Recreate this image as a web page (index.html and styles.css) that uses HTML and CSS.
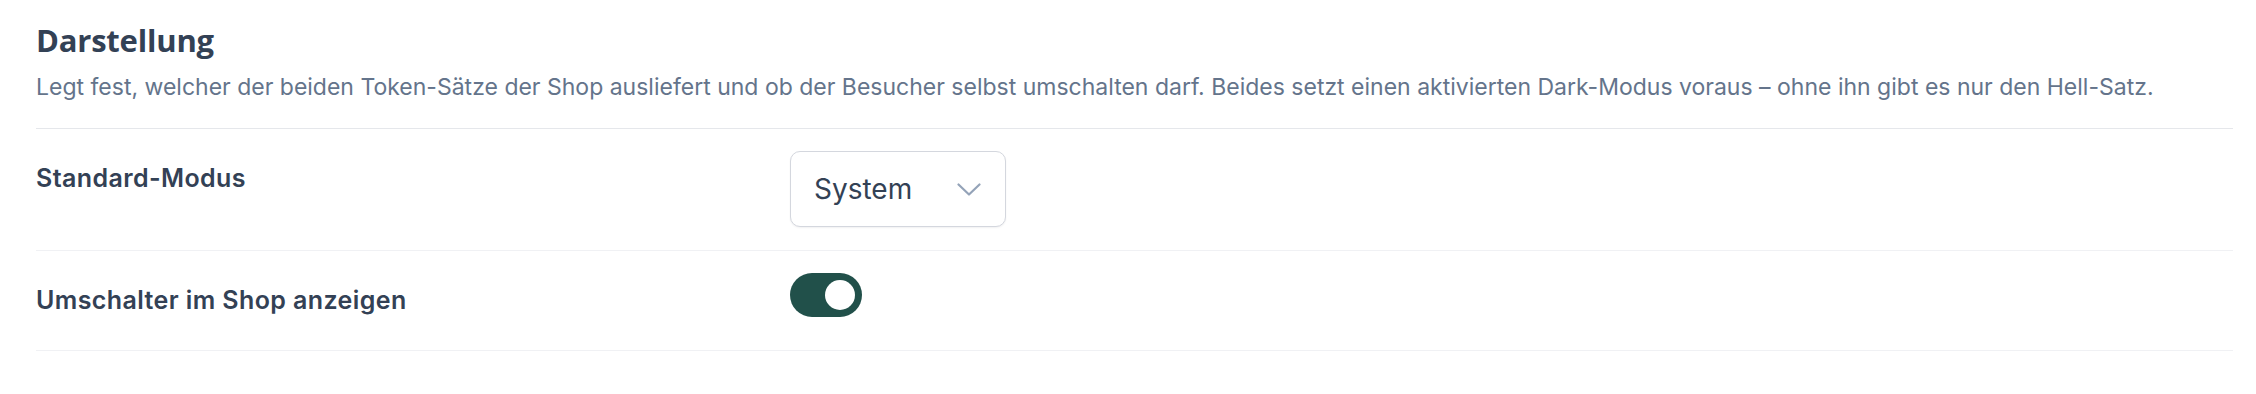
FILE: index.html
```html
<!DOCTYPE html>
<html lang="de">
<head>
<meta charset="utf-8">
<title>Darstellung</title>
<link rel="stylesheet" href="styles.css">
</head>
<body>
<section class="settings">
  <header class="settings-header">
    <h2 class="settings-title">Darstellung</h2>
    <p class="settings-desc">Legt fest, welcher der beiden Token-Sätze der Shop ausliefert und ob der Besucher selbst umschalten darf. Beides setzt einen aktivierten Dark-Modus voraus – ohne ihn gibt es nur den Hell-Satz.</p>
  </header>
  <div class="row">
    <label class="row-label" for="mode">Standard-Modus</label>
    <div class="row-control">
      <div class="select">
        <span class="select-value">System</span>
        <svg class="select-chevron" width="24" height="13" viewBox="0 0 24 13" aria-hidden="true">
          <path d="M1.5 1.5 L12 11.5 L22.5 1.5" fill="none" stroke="currentColor" stroke-width="2.2" stroke-linecap="round" stroke-linejoin="round"/>
        </svg>
      </div>
    </div>
  </div>
  <div class="row">
    <span class="row-label">Umschalter im Shop anzeigen</span>
    <div class="row-control">
      <span class="toggle is-on" role="switch" aria-checked="true"><span class="toggle-knob"></span></span>
    </div>
  </div>
</section>
</body>
</html>
```
FILE: styles.css
```css
html, body {
  margin: 0;
  padding: 0;
  background: #ffffff;
}

body {
  font-family: Inter, "Noto Sans", sans-serif;
  color: #334155;
}

.settings {
  padding: 22px 23px 0 36px;
}

.settings-header {
  padding-bottom: 25px;
  border-bottom: 1px solid #e5e7eb;
}

.settings-title {
  margin: 0;
  font-family: "Open Sans", "Noto Sans", sans-serif;
  font-weight: 700;
  font-size: 31px;
  line-height: 36px;
  letter-spacing: -0.2px;
  color: #334155;
}

.settings-desc {
  margin: 13px 0 0;
  font-size: 23px;
  line-height: 32px;
  color: #64748b;
}

.row {
  display: grid;
  grid-template-columns: 754px 1fr;
  align-items: start;
  padding: 22px 0 23px;
  border-bottom: 1px solid #f0f1f4;
}

.row-label {
  padding: 11px 0;
  font-size: 25px;
  line-height: 32px;
  font-weight: 600;
  letter-spacing: 0.4px;
  color: #334155;
}

.row-control {
  display: flex;
  align-items: flex-start;
}

.select {
  box-sizing: border-box;
  width: 216px;
  height: 76px;
  display: flex;
  align-items: center;
  justify-content: space-between;
  padding: 0 24px 0 23px;
  border: 1px solid #d4d7de;
  border-radius: 10px;
  background: #ffffff;
  box-shadow: 0 1px 2px rgba(15, 23, 42, 0.06);
}

.select-value {
  font-size: 28px;
  line-height: 36px;
  color: #334155;
}

.select-chevron {
  color: #94a3b8;
  margin-top: 1px;
}

.toggle {
  box-sizing: border-box;
  width: 72px;
  height: 44px;
  border-radius: 22px;
  background: #21504a;
  display: flex;
  align-items: center;
  justify-content: flex-end;
  padding: 0 7px;
}

.toggle-knob {
  width: 30px;
  height: 30px;
  border-radius: 50%;
  background: #ffffff;
}
```
